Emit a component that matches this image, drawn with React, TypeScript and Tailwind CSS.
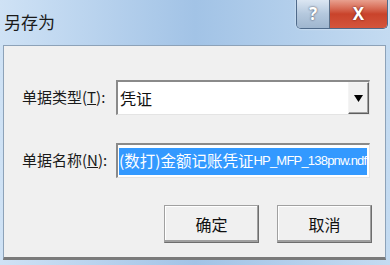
import React from 'react';

const cjk = { fontFamily: '"Noto Sans CJK SC", "Noto Sans", sans-serif' };
const latin = { fontFamily: '"Liberation Sans", "Noto Sans CJK SC", sans-serif' };

function TitleButtons() {
  return (
    <div className="flex h-[29px] mr-[2px] rounded-b-[5px] border border-t-0 border-[#4f6a8a] overflow-hidden shadow-[0_0_2px_rgba(255,255,255,0.8)]">
      <div className="w-[33px] flex items-center justify-center bg-gradient-to-b from-[#dbe6f2] via-[#b4c8dd] to-[#9fb6cf] border-r border-[#5b6f87] text-white text-[17px] font-bold [text-shadow:0_0_2px_#334]">
        ?
      </div>
      <div className="w-[57px] flex items-center justify-center bg-gradient-to-b from-[#e8a08f] via-[#c9432b] to-[#d4553c] text-white text-[17px] font-bold [text-shadow:0_0_2px_#511]">
        X
      </div>
    </div>
  );
}

function Sunken({ children, className = '' }: { children: React.ReactNode; className?: string }) {
  return (
    <div className={`border-t-2 border-l-2 border-t-[#8a8a8a] border-l-[#8a8a8a] border-b border-r border-b-[#e4e4e4] border-r-[#e4e4e4] bg-white ${className}`}>
      {children}
    </div>
  );
}

function Label({ text, keyChar }: { text: string; keyChar: string }) {
  return (
    <div className="w-[112px] pl-[18px] text-[15px] text-[#1a1a1a] whitespace-nowrap" style={cjk}>
      {text}(<span className="underline">{keyChar}</span>):
    </div>
  );
}

function WinButton({ label }: { label: string }) {
  return (
    <button
      className="w-[95px] h-[38px] bg-[#f0f0f0] border border-t-[#a0a0a0] border-l-[#a0a0a0] border-r-[#6e6e6e] border-b-[#6e6e6e] shadow-[inset_-1px_-2px_0_#a0a0a0,inset_1px_1px_0_#ffffff] text-[16px] text-[#111] flex items-center justify-center"
      style={cjk}
    >
      {label}
    </button>
  );
}

export default function App() {
  return (
    <div className="w-[390px] h-[265px] overflow-hidden flex flex-col bg-gradient-to-r from-[#cfe2f5] via-[#a2c3e6] to-[#c4dbf1]">
      <div className="h-[45px] flex items-start justify-between">
        <div className="pl-[4px] pt-[9px] text-[17px] text-[#1b1b1b]" style={cjk}>
          另存为
        </div>
        <TitleButtons />
      </div>
      <div className="ml-[3px] mr-[4px] h-[215px] bg-[#f0f0f0] border border-[#8da2b8] border-b-[3px] border-b-[#7a7a7a] flex flex-col">
        <div className="flex items-center mt-[34px]">
          <Label text="单据类型" keyChar="T" />
          <Sunken className="w-[254px] h-[35px] flex items-stretch">
            <div className="flex-1 pl-[2px] flex items-center text-[16px] text-[#111]" style={cjk}>
              凭证
            </div>
            <div className="w-[21px] bg-[#f0f0f0] border border-t-[#f4f4f4] border-l-[#f4f4f4] border-r-[#5e5e5e] border-b-[#5e5e5e] shadow-[inset_-1px_-1px_0_#a0a0a0] flex items-center justify-center">
              <svg width="9" height="7" viewBox="0 0 9 7">
                <path d="M0 0H9L4.5 7Z" fill="#000" />
              </svg>
            </div>
          </Sunken>
        </div>
        <div className="flex items-center mt-[28px]">
          <Label text="单据名称" keyChar="N" />
          <Sunken className="w-[254px] h-[35px] flex items-center overflow-hidden">
            <div className="ml-[1px] mr-[2px] h-[27px] flex-1 bg-[#3399ff] text-white whitespace-nowrap overflow-hidden flex items-center">
              <span className="text-[15.5px]" style={cjk}>(数打)金额记账凭证</span>
              <span className="text-[13px] tracking-[-0.8px]" style={latin}>HP_MFP_138pnw.ndf</span>
            </div>
          </Sunken>
        </div>
        <div className="flex justify-end gap-[18px] mt-[27px] mr-[13px]">
          <WinButton label="确定" />
          <WinButton label="取消" />
        </div>
      </div>
    </div>
  );
}
